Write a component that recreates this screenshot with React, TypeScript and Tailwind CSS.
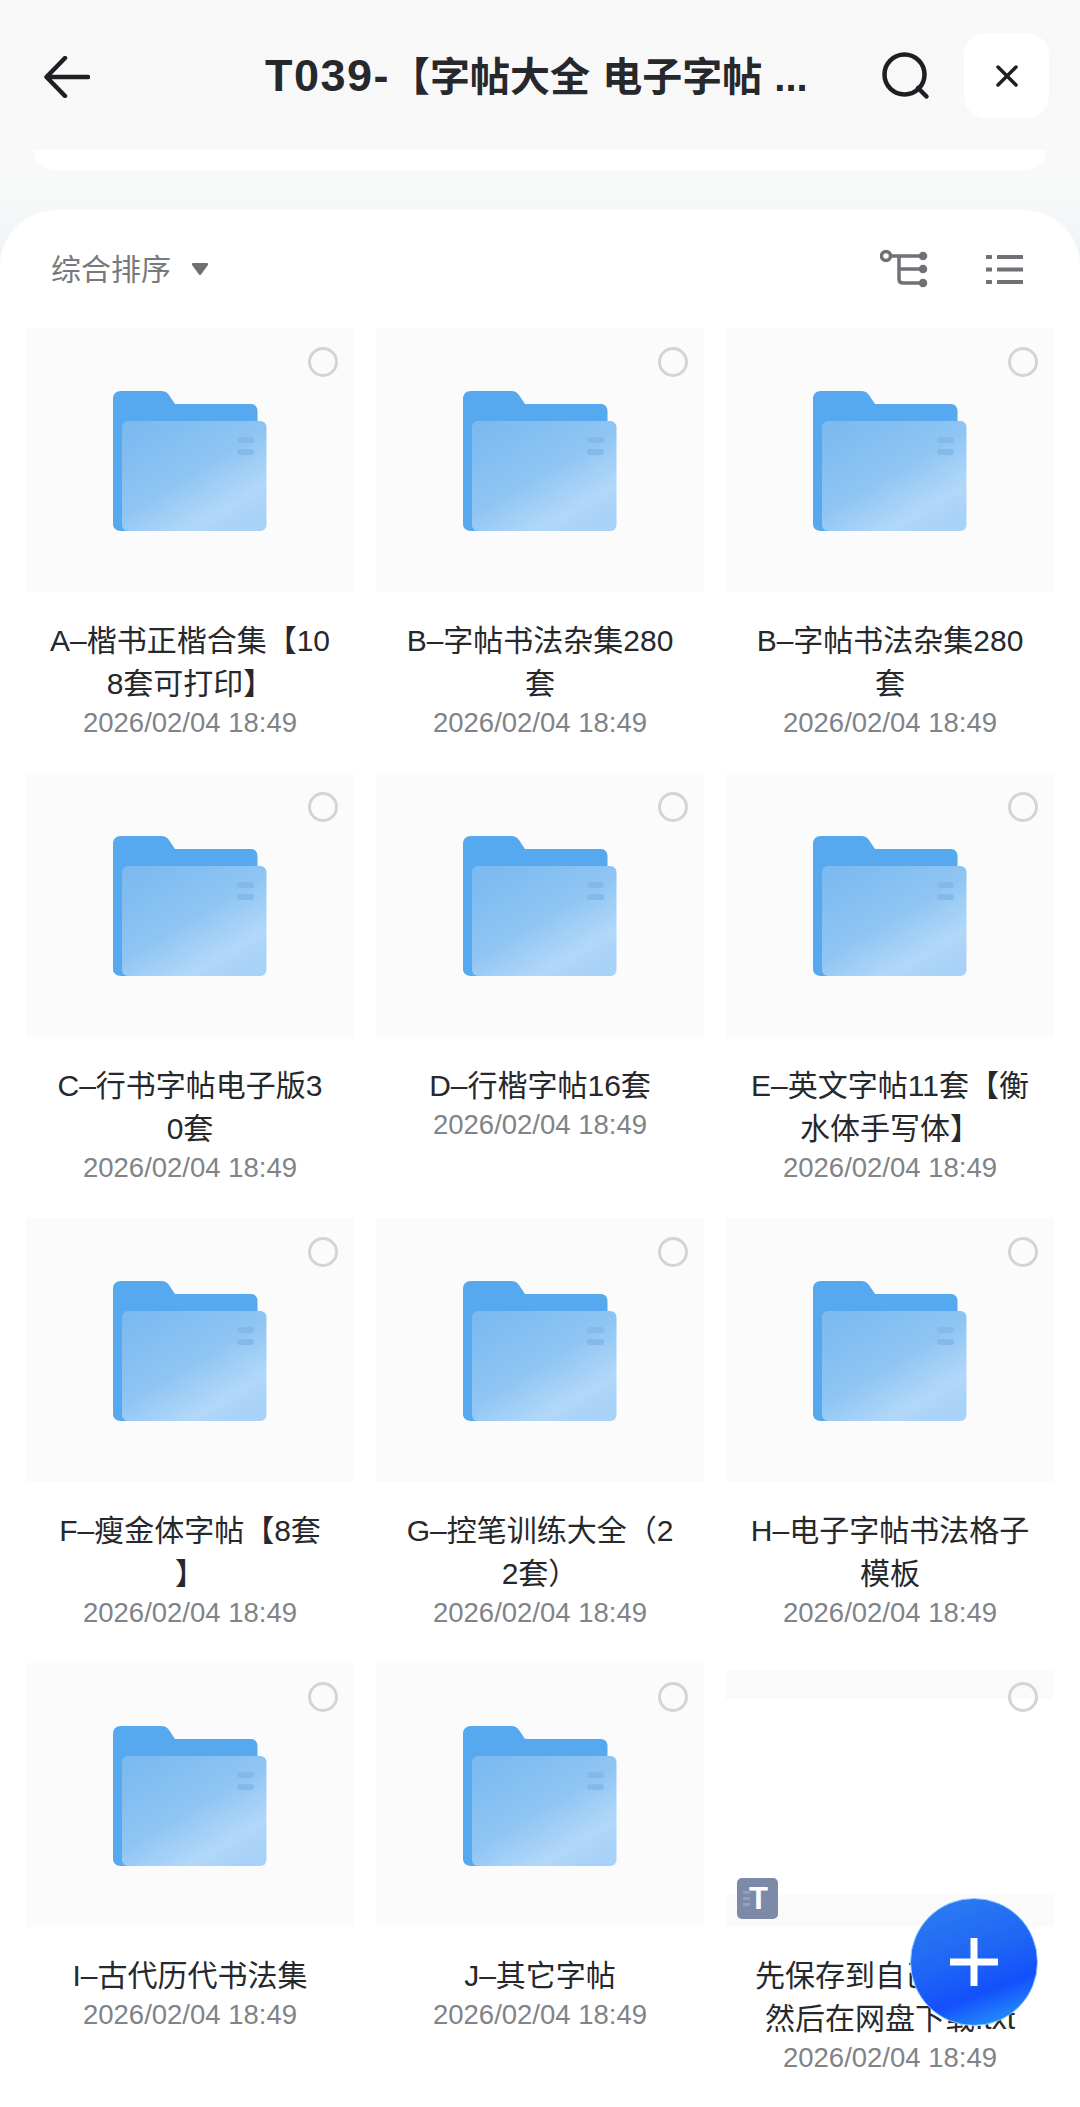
const FONT = 'font-["Liberation_Sans","Noto_Sans_CJK_SC",sans-serif]';

function Folder() {
  return (
    <svg width="154" height="141" viewBox="0 0 154 141" fill="none">
      <defs>
        <linearGradient id="front" x1="0.1" y1="0.05" x2="0.8" y2="0.95">
          <stop offset="0" stopColor="#7cbaf0" />
          <stop offset="0.5" stopColor="#8fc5f3" />
          <stop offset="0.85" stopColor="#b2d8f9" />
          <stop offset="1" stopColor="#a8d2f7" />
        </linearGradient>
      </defs>
      <path d="M8 0H48C52 0 54 1.500 56 4L62 13H138C142 13 144.500 16 144.500 20V134C144.500 138 142 140 138 140H8C3 140 0 137 0 133V8C0 3 3 0 8 0Z" fill="#56a9ee" />
      <rect x="9" y="30" width="144.500" height="110" rx="6" fill="url(#front)" />
      <rect x="124" y="46" width="17" height="6" rx="3" fill="#84b9e8" />
      <rect x="124" y="58" width="17" height="6" rx="3" fill="#84b9e8" />
    </svg>
  );
}

function Radio() {
  return <div className="absolute right-[16px] top-[19px] size-[30px] rounded-full border-[3px] border-[#d4d4d4]" />;
}

function Item({ lines, plain }: { lines: string[]; plain?: boolean }) {
  return (
    <div className="flex h-[445px] w-[350px] flex-col items-center">
      <div className={`relative flex h-[264px] w-[328px] items-center justify-center ${plain ? "bg-white" : "bg-[#fbfbfb]"}`}>
        {plain ? (
          <>
            <div className="absolute inset-x-0 top-[8px] h-[28px] bg-[#fafafa]" />
            <div className="absolute inset-x-0 bottom-0 h-[32px] bg-[#fafafa]" />
            <div className="absolute bottom-[8px] left-[11px] flex size-[41px] items-center justify-center rounded-[5px] bg-[#7c8aa8] pl-[2px] text-[31px] font-bold leading-none text-white">
              <div className="absolute left-[6px] top-[13px] flex flex-col gap-[3px]">
                <span className="block h-[3px] w-[7px] bg-[#94a0b9]" />
                <span className="block h-[3px] w-[7px] bg-[#94a0b9]" />
                <span className="block h-[3px] w-[7px] bg-[#94a0b9]" />
              </div>
              <span className="relative">T</span>
            </div>
          </>
        ) : (
          <div className="mt-[2px]">
            <Folder />
          </div>
        )}
        <Radio />
      </div>
      <div className="mt-[27px] w-[310px] text-center text-[30px] leading-[43px] text-[#26282c]">
        {lines.map((l) => (
          <div key={l} className="whitespace-nowrap">{l}</div>
        ))}
      </div>
      <div className="-mt-[1px] text-[27.500px] leading-[38px] text-[#808387]">2026/02/04 18:49</div>
    </div>
  );
}

const items: { lines: string[]; plain?: boolean }[] = [
  { lines: ["A–楷书正楷合集【10", "8套可打印】"] },
  { lines: ["B–字帖书法杂集280", "套"] },
  { lines: ["B–字帖书法杂集280", "套"] },
  { lines: ["C–行书字帖电子版3", "0套"] },
  { lines: ["D–行楷字帖16套"] },
  { lines: ["E–英文字帖11套【衡", "水体手写体】"] },
  { lines: ["F–瘦金体字帖【8套", "】"] },
  { lines: ["G–控笔训练大全（2", "2套）"] },
  { lines: ["H–电子字帖书法格子", "模板"] },
  { lines: ["I–古代历代书法集"] },
  { lines: ["J–其它字帖"] },
  { lines: ["先保存到自己网盘，", "然后在网盘下载.txt"], plain: true },
];

export default function App() {
  return (
    <div className={`relative h-[2107px] w-[1080px] overflow-hidden bg-[linear-gradient(#f8f8f8_0px,#f8f9f9_180px,#f0f4f8_260px)] ${FONT}`}>
      <header className="flex h-[150px] items-start pl-[44px] pt-[32px]">
        <svg width="46" height="42" viewBox="0 0 46 42" fill="none" stroke="#1d1f23" strokeWidth="4.500" strokeLinecap="round" strokeLinejoin="round" className="mt-[24px] shrink-0">
          <path d="M44 21H3M21 2 2.500 21 21 40" />
        </svg>
        <div className="ml-[175px] mt-[20px] w-[545px] whitespace-nowrap text-[40px] font-bold leading-[48px] text-[#26282c] [word-spacing:1px]">
          <span className="text-[45px] tracking-[1.500px]">T039-</span>【字帖大全 电子字帖 ...
        </div>
        <svg width="50" height="50" viewBox="0 0 50 50" fill="none" stroke="#1d1f23" strokeWidth="4.500" strokeLinecap="round" className="ml-[72px] mt-[20px] shrink-0">
          <circle cx="22.500" cy="22.500" r="20" />
          <path d="M36 36 44.500 44.500" />
        </svg>
        <div className="ml-[32px] mt-[1px] flex size-[85px] shrink-0 items-center justify-center rounded-[22px] bg-white">
          <svg width="24" height="24" viewBox="0 0 24 24" fill="none" stroke="#1d1f23" strokeWidth="3.500" strokeLinecap="round">
            <path d="M3 3 21 21M21 3 3 21" />
          </svg>
        </div>
      </header>
      <div className="mx-[34px] h-[20px] rounded-b-[24px] bg-white" />
      <main className="mt-[40px] h-[1937px] rounded-t-[56px] bg-white">
        <div className="flex h-[118px] items-center pl-[51px] pr-[57px]">
          <span className="text-[30px] text-[#77797d]">综合排序</span>
          <svg width="18" height="14" viewBox="0 0 18 14" className="ml-[20px]">
            <path d="M2 1H16C17 1 17.500 2 17 3L10 12.500C9.500 13 8.500 13 8 12.500L1 3C.5 2 1 1 2 1Z" fill="#6d6f73" />
          </svg>
          <svg width="48" height="42" viewBox="0 0 48 42" fill="none" stroke="#707175" strokeWidth="3.500" strokeLinecap="round" className="ml-auto">
            <circle cx="6" cy="8" r="4.500" />
            <path d="M11 8H43M19 8V31C19 33.500 20.500 35 23 35H43M19 21H43" />
            <circle cx="43" cy="8" r="2.500" fill="#707175" />
            <circle cx="43" cy="21" r="2.500" fill="#707175" />
            <circle cx="43" cy="35" r="2.500" fill="#707175" />
          </svg>
          <svg width="37" height="29" viewBox="0 0 37 29" fill="#707175" className="ml-[58px]">
            <rect x="0" y="0" width="6" height="4" rx="0.5" />
            <rect x="11" y="0" width="26" height="4" rx="0.5" />
            <rect x="0" y="12.500" width="6" height="4" rx="0.5" />
            <rect x="11" y="12.500" width="26" height="4" rx="0.5" />
            <rect x="0" y="25" width="6" height="4" rx="0.5" />
            <rect x="11" y="25" width="26" height="4" rx="0.5" />
          </svg>
        </div>
        <div className="grid grid-cols-[350px_350px_350px] pl-[15px]">
          {items.map((it, i) => (
            <Item key={i} lines={it.lines} plain={it.plain} />
          ))}
        </div>
      </main>
      <button className="absolute left-[910px] top-[1898px] flex size-[128px] items-center justify-center rounded-full border border-[#8fd0ff] bg-[linear-gradient(160deg,#2f7ff0_0%,#1f66f5_45%,#1450fb_70%,#29a8fb_100%)]">
        <svg width="48" height="48" viewBox="0 0 48 48" fill="none" stroke="#fff" strokeWidth="7">
          <path d="M24 0V48M0 24H48" />
        </svg>
      </button>
    </div>
  );
}
